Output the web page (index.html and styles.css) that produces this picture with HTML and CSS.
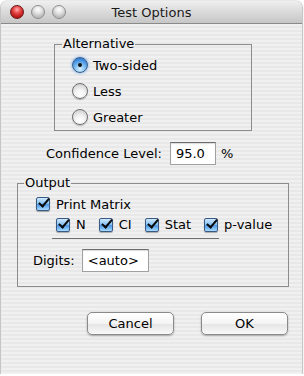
FILE: index.html
```html
<!DOCTYPE html>
<html lang="en">
<head>
    <meta charset="UTF-8">
    <meta name="viewport" content="width=device-width, initial-scale=1.0">
    <title>Test Options</title>
    <link rel="stylesheet" href="styles.css">
</head>
<body>
    <div class="window">
        <div class="titlebar">
            <div class="lights">
                <span class="light close"></span>
                <span class="light"></span>
                <span class="light"></span>
            </div>
            <div class="title">Test Options</div>
        </div>

        <div class="content">
            <fieldset class="group alt-group">
                <legend>Alternative</legend>
                <label class="radio-row"><span class="radio checked"></span>Two-sided</label>
                <label class="radio-row"><span class="radio"></span>Less</label>
                <label class="radio-row"><span class="radio"></span>Greater</label>
            </fieldset>

            <div class="conf-row">
                <span>Confidence Level:</span>
                <span class="field conf-field">95.0</span>
                <span class="pct">%</span>
            </div>

            <fieldset class="group out-group">
                <legend>Output</legend>
                <label class="check-row matrix-row"><span class="check"></span>Print Matrix</label>
                <div class="check-row sub-row">
                    <label class="check-item"><span class="check"></span>N</label>
                    <label class="check-item"><span class="check"></span>CI</label>
                    <label class="check-item"><span class="check"></span>Stat</label>
                    <label class="check-item"><span class="check"></span>p-value</label>
                </div>
                <div class="separator"></div>
                <div class="digits-row">
                    <span>Digits:</span>
                    <span class="field digits-field">&lt;auto&gt;</span>
                </div>
            </fieldset>

            <div class="buttons">
                <button type="button" class="btn">Cancel</button>
                <button type="button" class="btn">OK</button>
            </div>
        </div>
    </div>
</body>
</html>
```

FILE: styles.css
```css
body {
    margin: 0;
    background: #ffffff;
    font-family: "DejaVu Sans", sans-serif;
    font-size: 13px;
    color: #000;
}
.window {
    width: 301px;
    height: 373px;
    margin: 1px 0 0 1px;
    border-radius: 6px 6px 0 0;
    overflow: hidden;
    box-shadow: 0 1px 2px rgba(0,0,0,0.7), 0 0 1px rgba(0,0,0,0.5);
    display: flex;
    flex-direction: column;
}
.titlebar {
    height: 22px;
    flex: none;
    border-bottom: 1px solid #8a8a8a;
    background: linear-gradient(#efefef, #dadada 50%, #c6c6c6);
    display: flex;
    align-items: center;
    position: relative;
}
.lights {
    display: flex;
    gap: 7px;
    padding-left: 9px;
}
.light {
    width: 12px;
    height: 12px;
    border-radius: 50%;
    border: 1px solid #8e8e8e;
    background: radial-gradient(circle at 50% 30%, #ffffff 0, #e4e4e4 35%, #b8b8b8 75%, #d6d6d6 100%);
}
.light.close {
    border-color: #6b1a1a;
    background: radial-gradient(circle at 50% 30%, #ffb0b0 0, #e84848 35%, #b41414 75%, #e05050 100%);
}
.title {
    position: absolute;
    left: 0;
    right: 0;
    text-align: center;
    color: #1a1a1a;
    pointer-events: none;
}
.content {
    flex: 1;
    display: flex;
    flex-direction: column;
    align-items: flex-start;
    background: repeating-linear-gradient(#f0f0f0 0 2px, #e8e8e8 2px 4px);
}
.group {
    margin: 0;
    padding: 0 0 0 7px;
    border: 1px solid #8c8c8c;
    box-sizing: border-box;
    min-width: 0;
}
.group legend {
    padding: 0 1px;
    line-height: 16px;
}
.alt-group {
    margin: 12px 0 0 53px;
    width: 198px;
}
.radio-row {
    display: flex;
    align-items: center;
    gap: 5px;
    height: 26px;
    margin-left: 10px;
}
.radio {
    width: 14px;
    height: 14px;
    border-radius: 50%;
    border: 1px solid #707070;
    background: radial-gradient(circle at 50% 75%, #ffffff 0, #f2f2f2 40%, #c4c4c4 100%);
    box-shadow: 0 1px 1px rgba(0,0,0,0.25);
    position: relative;
}
.radio.checked {
    border-color: #3a5f8c;
    background: radial-gradient(circle at 50% 80%, #d8f0ff 0, #7cbcf0 40%, #2f7ed8 80%, #4a90e0 100%);
    box-shadow: 0 0 3px rgba(70,140,230,0.8);
}
.radio.checked::after {
    content: "";
    position: absolute;
    left: 5px;
    top: 5px;
    width: 4px;
    height: 4px;
    border-radius: 50%;
    background: #111;
}
.conf-row {
    display: flex;
    align-items: center;
    height: 23px;
    margin: 11px 0 0 45px;
}
.field {
    box-sizing: border-box;
    height: 23px;
    background: #fff;
    border: 1px solid #a0a0a0;
    border-top-color: #6e6e6e;
    box-shadow: inset 0 1px 1px rgba(0,0,0,0.15);
    padding: 3px 0 0 5px;
}
.conf-field {
    width: 46px;
    margin-left: 8px;
}
.pct {
    margin-left: 5px;
}
.out-group {
    margin: 10px 0 0 16px;
    width: 272px;
    padding-left: 6px;
    padding-bottom: 14px;
}
.check-row {
    display: flex;
    align-items: center;
}
.matrix-row {
    height: 22px;
    margin: 2px 0 0 12px;
    gap: 6px;
}
.sub-row {
    height: 19px;
    margin-left: 32px;
    gap: 13px;
}
.check-item {
    display: flex;
    align-items: center;
    gap: 6px;
}
.check {
    width: 12px;
    height: 12px;
    border: 1px solid #3a5a84;
    border-radius: 2px;
    background: linear-gradient(#cfe9ff, #7fbdf2 50%, #4d97e6 55%, #a8dcff);
    box-shadow: 0 1px 1px rgba(0,0,0,0.3);
    position: relative;
}
.check::after {
    content: "";
    position: absolute;
    left: 4px;
    top: -2px;
    width: 4px;
    height: 9px;
    border: solid #0a0a0a;
    border-width: 0 2.5px 2.5px 0;
    transform: rotate(40deg);
}
.separator {
    width: 167px;
    height: 1px;
    margin: 4px 0 0 28px;
    background: #6f6f6f;
}
.digits-row {
    display: flex;
    align-items: center;
    margin: 10px 0 0 9px;
}
.digits-field {
    width: 67px;
    margin-left: 7px;
}
.buttons {
    display: flex;
    gap: 27px;
    margin: 25px 0 0 86px;
}
.btn {
    width: 87px;
    height: 23px;
    font-family: "DejaVu Sans", sans-serif;
    font-size: 13px;
    color: #000;
    border: 1px solid #8a8a8a;
    border-radius: 5px;
    background: linear-gradient(#ffffff, #f4f4f4 50%, #e6e6e6 55%, #f8f8f8);
    box-shadow: 0 1px 2px rgba(0,0,0,0.3);
    padding: 0;
}
```
